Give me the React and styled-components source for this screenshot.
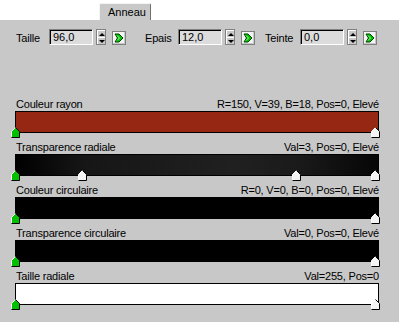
import React from 'react';
import styled, { createGlobalStyle } from 'styled-components';

const GlobalStyle = createGlobalStyle`
  body {
    margin: 0;
    background: #ffffff;
    font-family: "Liberation Sans", Arial, sans-serif;
  }
`;

const Window = styled.div`
  width: 399px;
  height: 322px;
  display: flex;
  flex-direction: column;
  overflow: hidden;
  font-size: 11px;
  letter-spacing: -0.2px;
  color: #000;
`;

const TabStrip = styled.div`
  height: 20px;
  display: flex;
  align-items: flex-end;
  padding-left: 99px;
  background: #ffffff;
  border-bottom: 1px solid #ffffff;
  box-sizing: border-box;
`;

const Tab = styled.div`
  width: 52px;
  height: 17px;
  box-sizing: border-box;
  background: #c8c8c8;
  border-top: 1px solid #f4f4f4;
  border-left: 1px solid #f4f4f4;
  border-right: 1px solid #707070;
  border-radius: 2px 2px 0 0;
  margin-bottom: -1px;
  padding: 2px 0 0 8px;
  letter-spacing: 0;
`;

const Panel = styled.div`
  flex: 1;
  background: #c8c8c8;
  padding-top: 9px;
`;

const ParamRow = styled.div`
  display: flex;
  align-items: center;
  height: 16px;
  padding-left: 16px;
`;

const ParamGroup = styled.div`
  display: flex;
  align-items: center;
  margin-left: ${p => p.$offset || 0}px;
`;

const ParamLabel = styled.span`
  width: ${p => p.$width}px;
  padding-top: 1px;
`;

const NumberBox = styled.div`
  width: 44px;
  height: 16px;
  box-sizing: border-box;
  background: #dcdcdc;
  border-top: 1px solid #808080;
  border-left: 1px solid #808080;
  border-bottom: 1px solid #ffffff;
  border-right: 1px solid #ffffff;
  box-shadow: inset 1px 1px 0 #000;
  padding: 1px 0 0 3px;
  line-height: 12px;
  letter-spacing: 0;
`;

const Spinner = styled.div`
  width: 10px;
  height: 16px;
  margin-left: 3px;
  display: flex;
  flex-direction: column;
  box-sizing: border-box;
  border: 1px solid #808080;
`;

const SpinHalf = styled.div`
  flex: 1;
  display: flex;
  align-items: center;
  justify-content: center;
  background: #c8c8c8;
  border-top: 1px solid #ffffff;
  border-left: 1px solid #ffffff;
`;

const Arrow = styled.span`
  width: 0;
  height: 0;
  border-left: 3px solid transparent;
  border-right: 3px solid transparent;
  ${p => (p.$up ? 'border-bottom: 3px solid #000;' : 'border-top: 3px solid #000;')}
`;

const KeyButton = styled.div`
  width: 14px;
  height: 14px;
  margin-left: 6px;
  margin-top: 2px;
  box-sizing: border-box;
  background: #f4f4f4;
  border: 1px solid #808080;
  box-shadow: inset -1px -1px 0 #c8c8c8;
  display: flex;
  align-items: center;
  justify-content: center;
`;

const Curves = styled.div`
  margin-top: 53px;
  padding-left: 15px;
  width: 364px;
  display: flex;
  flex-direction: column;
`;

const Curve = styled.div`
  height: 43px;
  display: flex;
  flex-direction: column;
`;

const CurveHeader = styled.div`
  height: 13px;
  display: flex;
  justify-content: space-between;
  padding-left: 1px;
  line-height: 12px;
`;

const Bar = styled.div`
  position: relative;
  height: 22px;
  box-sizing: border-box;
  border: 1px solid #000;
  background: ${p => p.$fill};
`;

const Marker = styled.svg`
  position: absolute;
  top: 15px;
  width: 9px;
  height: 11px;
  margin-left: -5px;
`;

const Knob = ({ active, left }) => (
  <Marker viewBox="0 0 9 11" style={{ left }}>
    <polygon points="0.5,4.5 4.5,0.5 8.5,4.5 8.5,10.5 0.5,10.5" fill={active ? '#00c000' : '#f4f4f4'} />
    <polyline points="0.5,10 0.5,4.5 4.5,0.5" fill="none" stroke="#ffffff" />
    <polyline points="4.5,0.5 8.5,4.5 8.5,10.5 0.5,10.5" fill="none" stroke="#000" />
  </Marker>
);

const KeyIcon = () => (
  <svg width="10" height="10" viewBox="0 0 10 10">
    <polygon points="1,1 5,1 9,5 5,9 1,9 3.5,5" fill="#00c000" stroke="#004000" strokeWidth="1" />
    <polyline points="3,2.5 5.5,5 3,7.5" fill="none" stroke="#a0ffa0" strokeWidth="1" />
  </svg>
);

const Param = ({ label, width, value, offset }) => (
  <ParamGroup $offset={offset}>
    <ParamLabel $width={width}>{label}</ParamLabel>
    <NumberBox>{value}</NumberBox>
    <Spinner>
      <SpinHalf><Arrow $up /></SpinHalf>
      <SpinHalf><Arrow /></SpinHalf>
    </Spinner>
    <KeyButton><KeyIcon /></KeyButton>
  </ParamGroup>
);

const curves = [
  { name: 'Couleur rayon', info: 'R=150, V=39, B=18, Pos=0, Elevé', fill: '#962712', marks: [0, 1] },
  {
    name: 'Transparence radiale',
    info: 'Val=3, Pos=0, Elevé',
    fill: 'linear-gradient(to right, #000 0%, #161616 19%, #202020 60%, #1a1a1a 78%, #060606 100%)',
    marks: [0, 0.186, 0.78, 1],
  },
  { name: 'Couleur circulaire', info: 'R=0, V=0, B=0, Pos=0, Elevé', fill: '#000000', marks: [0, 1] },
  { name: 'Transparence circulaire', info: 'Val=0, Pos=0, Elevé', fill: '#000000', marks: [0, 1] },
  { name: 'Taille radiale', info: 'Val=255, Pos=0', fill: '#ffffff', marks: [0, 1] },
];

export default function App() {
  return (
    <Window>
      <GlobalStyle />
      <TabStrip>
        <Tab>Anneau</Tab>
      </TabStrip>
      <Panel>
        <ParamRow>
          <Param label="Taille" width={33} value="96,0" />
          <Param label="Epais" width={33} value="12,0" offset={19} />
          <Param label="Teinte" width={35} value="0,0" offset={10} />
        </ParamRow>
        <Curves>
          {curves.map(c => (
            <Curve key={c.name}>
              <CurveHeader>
                <span>{c.name}</span>
                <span>{c.info}</span>
              </CurveHeader>
              <Bar $fill={c.fill}>
                {c.marks.map((m, i) => (
                  <Knob key={i} active={i === 0} left={`${m * 360}px`} />
                ))}
              </Bar>
            </Curve>
          ))}
        </Curves>
      </Panel>
    </Window>
  );
}
